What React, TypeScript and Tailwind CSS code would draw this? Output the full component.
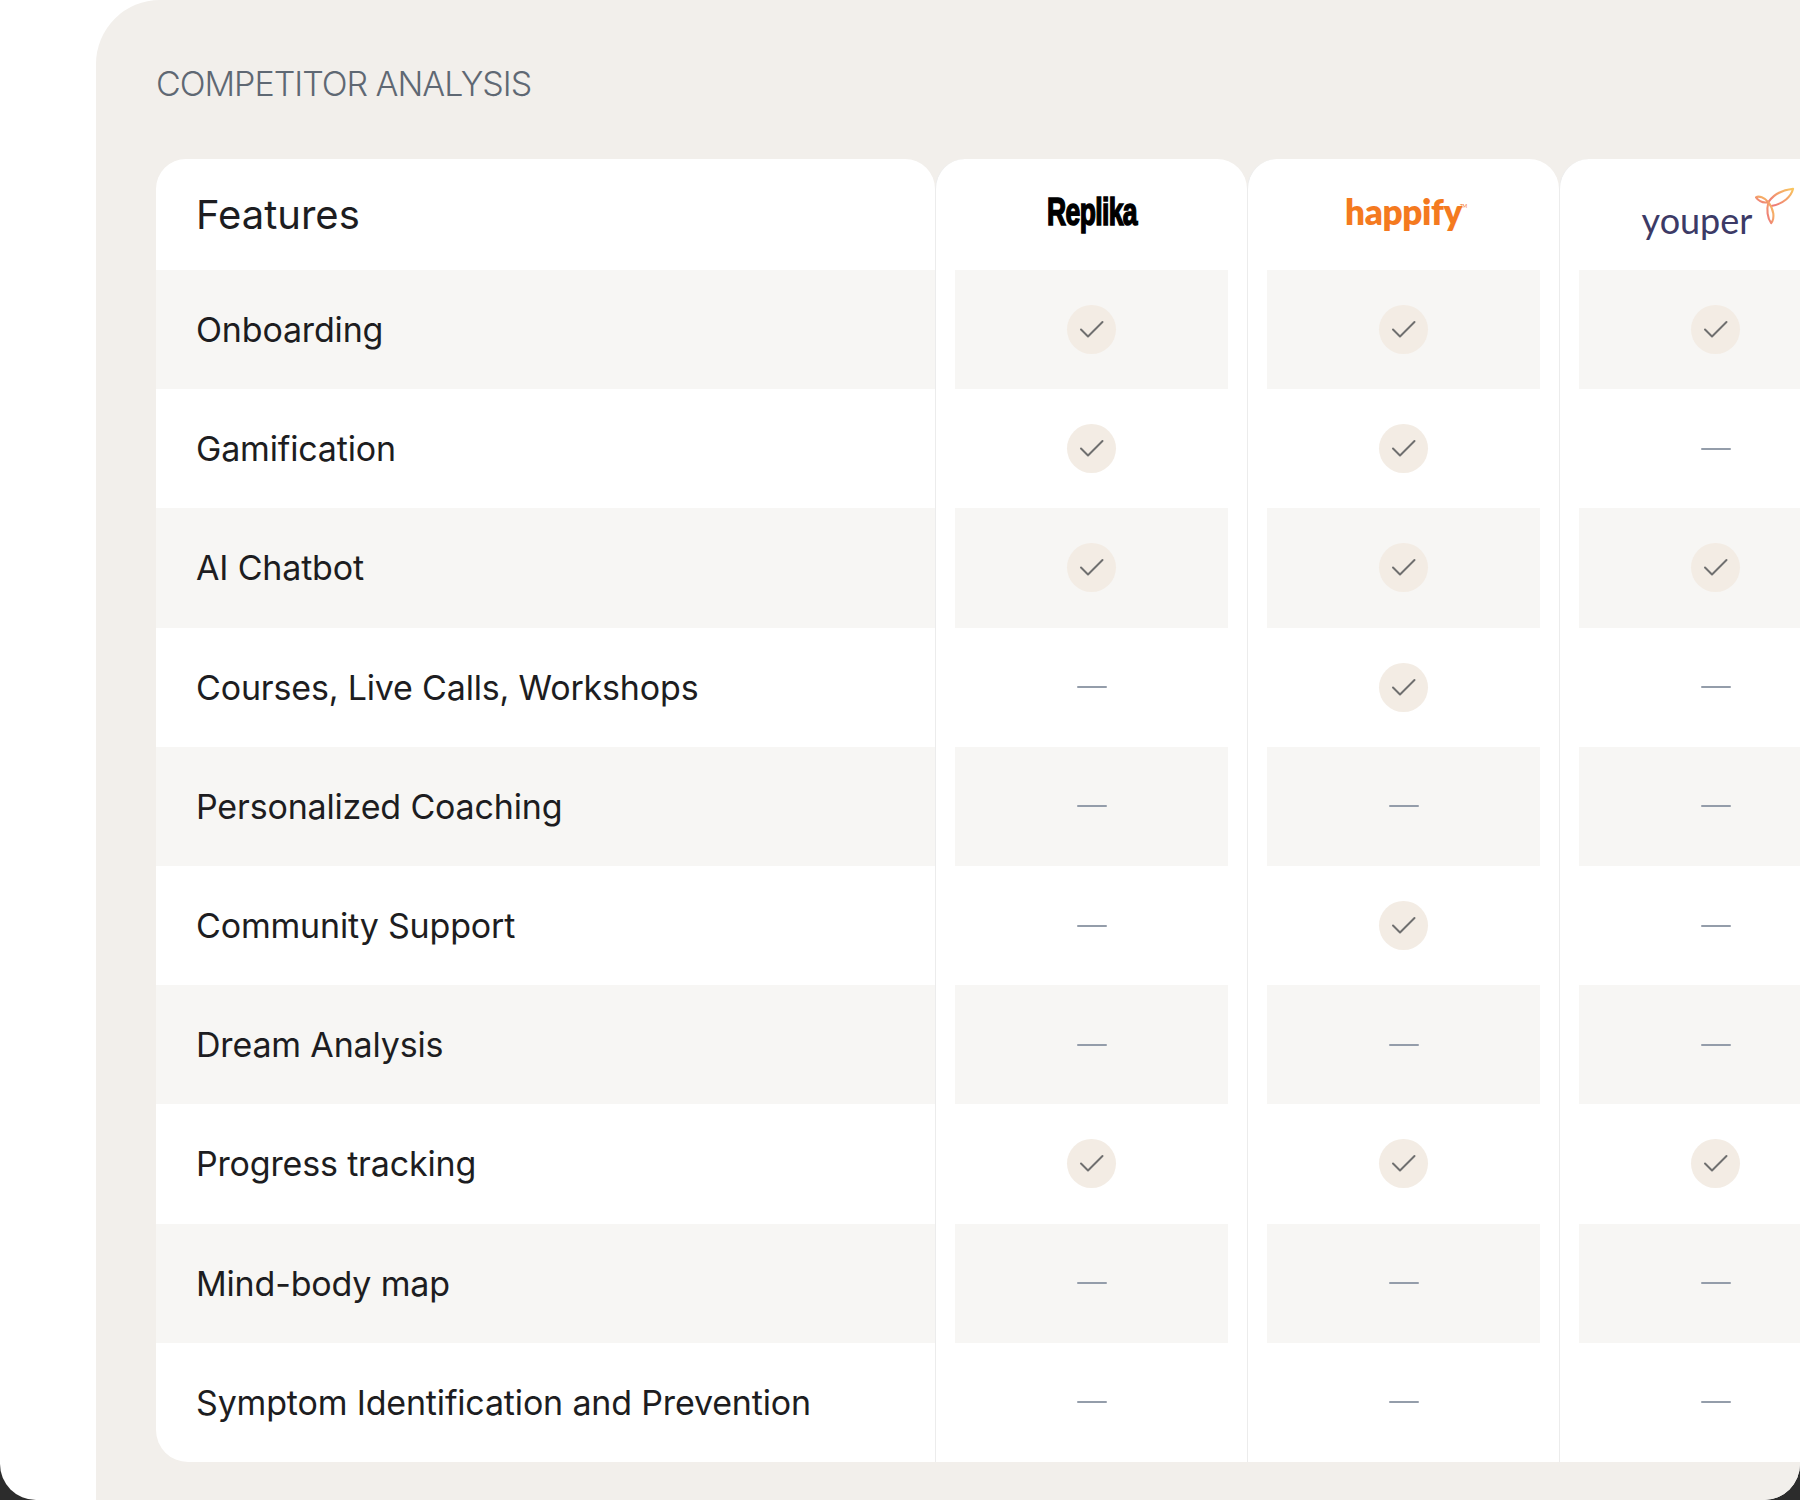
type Mark = 0 | 1;

const rows: { label: string; marks: Mark[] }[] = [
  { label: "Onboarding", marks: [1, 1, 1] },
  { label: "Gamification", marks: [1, 1, 0] },
  { label: "AI Chatbot", marks: [1, 1, 1] },
  { label: "Courses, Live Calls, Workshops", marks: [0, 1, 0] },
  { label: "Personalized Coaching", marks: [0, 0, 0] },
  { label: "Community Support", marks: [0, 1, 0] },
  { label: "Dream Analysis", marks: [0, 0, 0] },
  { label: "Progress tracking", marks: [1, 1, 1] },
  { label: "Mind-body map", marks: [0, 0, 0] },
  { label: "Symptom Identification and Prevention", marks: [0, 0, 0] },
];

function CheckBadge() {
  return (
    <div className="h-[49px] w-[49px] rounded-full bg-[#f3ece4]">
      <svg viewBox="0 0 49 49" className="h-[49px] w-[49px]" aria-hidden>
        <polyline
          points="14,24.5 21,31.5 35.5,17"
          fill="none"
          stroke="#6f6f6f"
          strokeWidth="2"
          strokeLinecap="round"
          strokeLinejoin="round"
        />
      </svg>
    </div>
  );
}

function Dash() {
  return <div className="h-[2px] w-[30px] rounded-full bg-[#949daa]" />;
}

function ReplikaLogo() {
  return (
    <span className="inline-block scale-x-[0.68] font-['Liberation_Sans',sans-serif] text-[39px] leading-none font-bold tracking-tight text-black [-webkit-text-stroke:1.6px_black]">
      Replika
    </span>
  );
}

function HappifyLogo() {
  return (
    <span className="relative font-['Lato',sans-serif] text-[35px] leading-none font-extrabold tracking-[-0.01em] text-[#f47a1f]">
      happify
      <span className="absolute top-[10px] -right-[5px] text-[5px] font-normal">TM</span>
    </span>
  );
}

function YouperLogo() {
  return (
    <span className="flex items-end gap-[3px] pl-[6px]">
      <span className="font-['Lato',sans-serif] text-[36px] leading-none text-[#3c3a66]">
        youper
      </span>
      <svg viewBox="0 0 42 40" className="mb-[12px] h-[40px] w-[40px]" aria-hidden>
        <defs>
          <linearGradient id="leaf" x1="0" y1="1" x2="1" y2="0">
            <stop offset="0" stopColor="#ec6f7c" />
            <stop offset="1" stopColor="#f9c65e" />
          </linearGradient>
        </defs>
        <g fill="none" stroke="url(#leaf)" strokeWidth="2.2" strokeLinecap="round" strokeLinejoin="round">
          <path d="M14 16 C10 11, 4 9, 1 11 C4 15, 9 17, 14 16 Z" />
          <path d="M14 16 C20 7, 30 3, 40 2 C38 10, 30 18, 17 20" />
          <path d="M14 16 C12 24, 13 33, 17 38 C21 33, 20 24, 14 16" />
        </g>
      </svg>
    </span>
  );
}

const competitors = [
  { name: "Replika", logo: <ReplikaLogo /> },
  { name: "happify", logo: <HappifyLogo /> },
  { name: "youper", logo: <YouperLogo /> },
];

export default function App() {
  return (
    <div className="h-[1500px] w-[1800px] bg-[#2c2c2c] font-['Inter',sans-serif]">
      <div className="flex h-full overflow-hidden rounded-b-[36px] bg-white pl-[96px]">
        <div className="flex-1 overflow-hidden rounded-tl-[64px] bg-[#f2efeb] pl-[60px]">
          <h2 className="mt-[64px] text-[34px] leading-[40px] font-light tracking-[-0.03em] text-[#5f6873]">
            COMPETITOR ANALYSIS
          </h2>

          <div className="mt-[55px] flex">
            {/* Feature names */}
            <div className="w-[779px] shrink-0 overflow-hidden rounded-t-[30px] rounded-bl-[32px] bg-white">
              <div className="flex h-[111px] items-center pl-[40px] text-[40px] text-[#1d1d21]">
                Features
              </div>
              {rows.map((r, i) => (
                <div
                  key={r.label}
                  className={`flex h-[119.2px] items-center pl-[40px] text-[34px] tracking-[-0.005em] text-[#1d1d21] ${
                    i % 2 === 0 ? "bg-[#f7f6f4]" : ""
                  }`}
                >
                  {r.label}
                </div>
              ))}
            </div>

            {/* Competitor columns */}
            {competitors.map((c, ci) => (
              <div
                key={c.name}
                className="w-[312px] shrink-0 rounded-t-[30px] border-l border-[#ececec] bg-white px-[19px]"
              >
                <div className="flex h-[111px] items-center justify-center pb-[6px]">
                  {c.logo}
                </div>
                {rows.map((r, i) => (
                  <div
                    key={r.label}
                    className={`flex h-[119.2px] items-center justify-center ${
                      i % 2 === 0 ? "bg-[#f7f6f4]" : ""
                    }`}
                  >
                    {r.marks[ci] ? <CheckBadge /> : <Dash />}
                  </div>
                ))}
              </div>
            ))}
          </div>
        </div>
      </div>
    </div>
  );
}
